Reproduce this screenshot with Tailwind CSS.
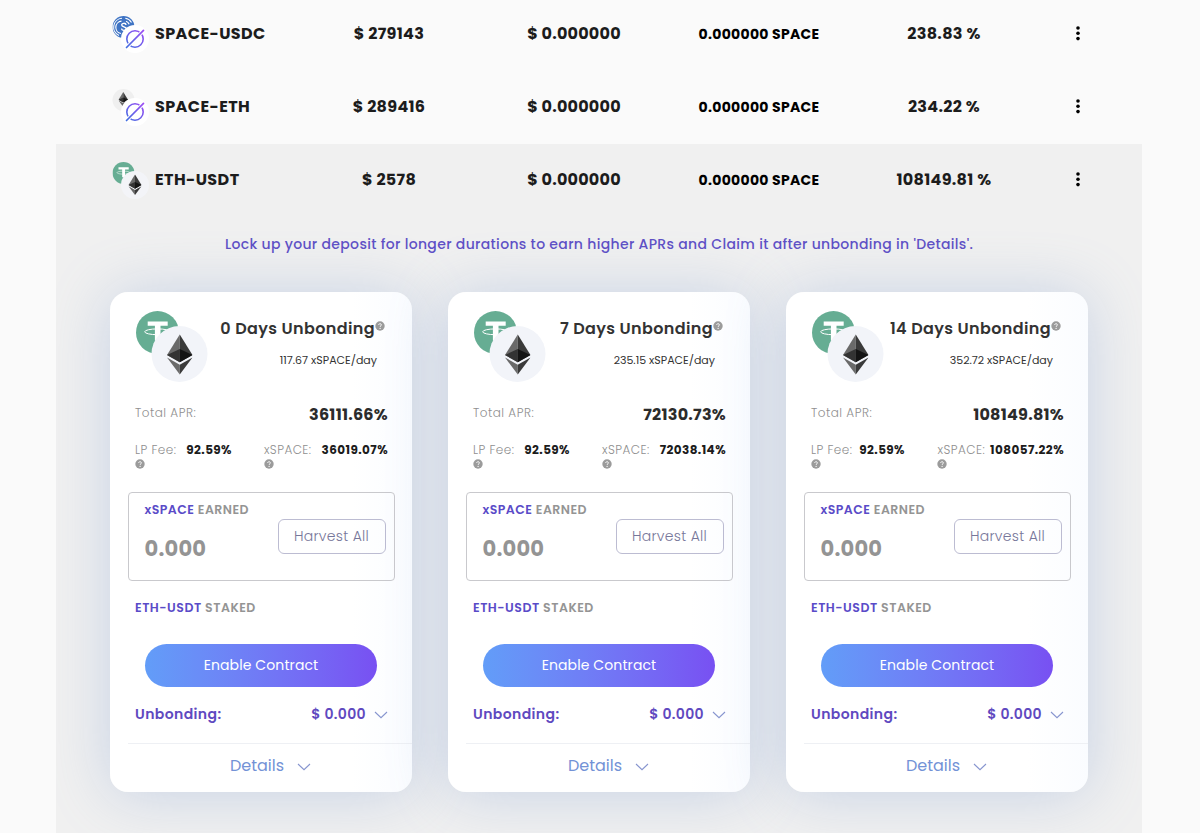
<!DOCTYPE html>
<html lang="en">
<head>
    <meta charset="UTF-8">
    <meta name="viewport" content="width=device-width, initial-scale=1.0">
    <title>Farms</title>
    <script src="https://cdn.jsdelivr.net/npm/@tailwindcss/browser@4"></script>
</head>
<body class="bg-[#fafafa] text-[#1c1c1c] font-['Poppins','Inter',sans-serif] h-[833px] overflow-hidden">

    <!-- Shared icons -->
    <svg class="absolute w-0 h-0">
        <defs>
            <linearGradient id="space-grad" gradientUnits="userSpaceOnUse" x1="5" y1="23" x2="23" y2="5">
                <stop offset="0" stop-color="#3f6fe0" />
                <stop offset="1" stop-color="#a04cf5" />
            </linearGradient>
        </defs>
        <symbol id="eth" viewBox="0 0 26 41">
            <path d="M13 0 0 21l13 7.500z" fill="#6a6a6a" />
            <path d="M13 0l13 21-13 7.500z" fill="#3a3a3a" />
            <path d="M13 15 0 21l13 7.500z" fill="#333" />
            <path d="M13 15l13 6-13 7.500z" fill="#141414" />
            <path d="M0 23.500 13 31v10z" fill="#6a6a6a" />
            <path d="M26 23.500 13 31v10z" fill="#3a3a3a" />
        </symbol>
        <symbol id="usdt" viewBox="0 0 43 43">
            <circle cx="21.500" cy="21.500" r="21.500" fill="#66ad93" />
            <path d="M11.700 10.500h20v4.300h-7.200v15h-5.600v-15h-7.200z" fill="#fff" />
            <ellipse cx="21.500" cy="20.800" rx="12.800" ry="2.900" fill="none" stroke="#fff" stroke-width="1" />
        </symbol>
        <symbol id="usdc" viewBox="0 0 22 22">
            <circle cx="11" cy="11" r="11" fill="#3f74c4" />
            <path d="M6.500 19.500A9 9 0 0 1 9.500 2.300M12.800 2.300a9 9 0 0 1 6.200 4.200" fill="none" stroke="#fff" stroke-width="1.100" />
            <path d="M8.500 17.500A6.200 6.200 0 0 1 9 5.200M13.500 5.200a6 6 0 0 1 3.200 3" fill="none" stroke="#fff" stroke-width="1.200" />
            <path d="M13.600 9c-.3-2.400-4.400-2.200-4.400 0s4.600 1.500 4.600 3.800-4.600 2.200-4.700-.3" fill="none" stroke="#fff" stroke-width="1.300" />
        </symbol>
        <symbol id="space" viewBox="0 0 28 28">
            <circle cx="14" cy="14" r="14" fill="#fff" />
            <circle cx="14" cy="14" r="8.200" fill="none" stroke="url(#space-grad)" stroke-width="1.600" />
            <path d="M6.500 21.500l15-15" stroke="#fff" stroke-width="3.400" />
            <path d="M5.500 22.500l17-17.200" stroke="url(#space-grad)" stroke-width="1.700" stroke-linecap="round" />
        </symbol>
        <symbol id="help" viewBox="0 0 10 10">
            <circle cx="5" cy="5" r="4.700" fill="#9b9b9b" />
            <path d="M3.700 4c0-1.800 2.700-1.700 2.700-.1 0 .9-1.300.9-1.300 2" fill="none" stroke="#fff" stroke-width=".9" />
            <circle cx="5.100" cy="7.400" r=".6" fill="#fff" />
        </symbol>
        <symbol id="chevron" viewBox="0 0 14 8">
            <path d="M1 1l6 5.700L13 1" fill="none" stroke="#8795cf" stroke-width="1.100" />
        </symbol>
        <symbol id="dots" viewBox="0 0 4 15">
            <circle cx="2" cy="2" r="1.800" /><circle cx="2" cy="7.300" r="1.800" /><circle cx="2" cy="12.600" r="1.800" />
        </symbol>
    </svg>

    <main class="pl-14 pr-[58px]">
        <div id="rows" class="-mt-0.5"></div>

        <!-- Expanded pool -->
        <section class="bg-[#f0f0f0] h-[700px] overflow-hidden">
            <div id="open-row"></div>
            <p class="mt-[17px] text-center text-sm leading-[21px] font-medium tracking-[0.33px] text-[#5f50c6] whitespace-nowrap">Lock up your deposit for longer durations to earn higher APRs and Claim it after unbonding in 'Details'.</p>
            <div id="cards" class="mt-[37px] pl-[54px] flex gap-9"></div>
        </section>
    </main>

    <script>
        const pairIcons = {
            "SPACE-USDC": `<use href="#usdc" x="0.500" y="0" width="22" height="22" /><use href="#space" x="9" y="9" width="28" height="28" />`,
            "SPACE-ETH": `<circle cx="11.500" cy="11" r="11" fill="#efefef" /><use href="#eth" x="6.500" y="3" width="9.500" height="15" /><use href="#space" x="9" y="9" width="28" height="28" />`,
            "ETH-USDT": `<use href="#usdt" x="0.500" y="0" width="22" height="22" /><circle cx="23" cy="23" r="14" fill="#f3f4f8" /><use href="#eth" x="16.300" y="12.500" width="13.400" height="20.500" />`
        };

        const pools = [
            { name: "SPACE-USDC", tvl: "$ 279143", apr: "238.83 %" },
            { name: "SPACE-ETH", tvl: "$ 289416", apr: "234.22 %" },
            { name: "ETH-USDT", tvl: "$ 2578", apr: "108149.81 %" }
        ];

        const cards = [
            { days: 0, rate: "117.67", apr: "36111.66%", xspace: "36019.07%", lpGap: "gap-[10px]", xGap: "gap-[10px]" },
            { days: 7, rate: "235.15", apr: "72130.73%", xspace: "72038.14%", lpGap: "gap-[10px]", xGap: "gap-[10px]" },
            { days: 14, rate: "352.72", apr: "108149.81%", xspace: "108057.22%", lpGap: "gap-[7px]", xGap: "gap-[5px]" }
        ];

        const rowHtml = p => `
            <div class="h-[73px] grid grid-cols-[240.5px_185px_185px_185px_185px_82px] items-center justify-items-center text-base font-bold tracking-[0.3px] whitespace-nowrap">
                <div class="justify-self-start pl-14 flex items-center gap-1.5">
                    <svg class="w-[37px] h-[37px]" viewBox="0 0 37 37">${pairIcons[p.name]}</svg>
                    <span class="pb-0.5 tracking-[0.4px]">${p.name}</span>
                </div>
                <span class="pb-0.5">${p.tvl}</span>
                <span class="pb-0.5 tracking-[0.22px]">$ 0.000000</span>
                <span class="pb-0.5 text-sm text-black">0.000000 SPACE</span>
                <span class="pb-0.5">${p.apr}</span>
                <svg class="w-1 h-[15px] mb-0.5"><use href="#dots" /></svg>
            </div>`;

        const cardHtml = c => `
            <div class="w-[302px] h-[500px] rounded-[18px] bg-linear-to-r from-white from-80% to-[#fafcff] shadow-[0_2px_60px_rgba(115,150,205,0.33)] flex flex-col">
                <div class="h-[110px] pt-[19px] pl-[26px] pr-[27px] flex justify-between">
                    <svg class="w-[72px] h-[72px]" viewBox="0 0 72 72">
                        <use href="#usdt" width="43" height="43" />
                        <circle cx="43.500" cy="43" r="28" fill="#f2f4f9" />
                        <use href="#eth" x="31" y="23" width="25.500" height="41" />
                    </svg>
                    <div class="pt-2 text-right whitespace-nowrap">
                        <div class="flex items-start justify-end">
                            <span class="text-base leading-5 font-semibold tracking-[0.37px] text-[#333]">${c.days} Days Unbonding</span>
                            <svg class="w-2.5 h-2.5 mt-0.5"><use href="#help" /></svg>
                        </div>
                        <div class="mt-[13px] pr-2 text-[11px] leading-4 text-[#333]">${c.rate} xSPACE/day</div>
                    </div>
                </div>

                <div class="h-[22px] pl-[25px] pr-6 flex justify-between whitespace-nowrap">
                    <span class="text-xs leading-[21px] font-light tracking-[0.5px] text-[#8f8f8f]">Total APR:</span>
                    <span class="text-base leading-[25px] font-bold tracking-[0.25px] text-[#2b2b2b]">${c.apr}</span>
                </div>
                <div class="mt-[18px] pl-[25px] pr-6 flex justify-between text-xs leading-4 tracking-[0.45px] whitespace-nowrap">
                    <div>
                        <div class="flex ${c.lpGap}"><span class="font-light text-[#8f8f8f]">LP Fee:</span><span class="font-bold tracking-[0.4px]">92.59%</span></div>
                        <svg class="w-2.5 h-2.5 mt-px"><use href="#help" /></svg>
                    </div>
                    <div>
                        <div class="flex ${c.xGap}"><span class="font-light text-[#8f8f8f]">xSPACE:</span><span class="font-bold tracking-[0.42px]">${c.xspace}</span></div>
                        <svg class="w-2.5 h-2.5 mt-px"><use href="#help" /></svg>
                    </div>
                </div>

                <div class="mt-[23px] ml-[17.5px] w-[267px] h-[89px] pl-4 pr-2 flex justify-between items-center border border-[#c9c9cd] rounded">
                    <div class="self-start pt-[9px]">
                        <div class="text-[12.5px] leading-4 font-semibold tracking-[0.45px] text-[#949494]"><span class="text-[#5a4bc8]">xSPACE</span> EARNED</div>
                        <div class="mt-[19px] text-[21px] leading-6 font-bold tracking-[0.2px] text-[#949494]">0.000</div>
                    </div>
                    <button class="w-[108px] h-[35px] pb-0.5 border border-[#bcbcd2] rounded-md text-sm font-light tracking-[0.3px] text-[#77779a]">Harvest All</button>
                </div>

                <div class="mt-[18px] pl-[25px] text-[12.5px] leading-[17px] font-semibold tracking-[0.5px] text-[#949494]"><span class="text-[#5a4bc8]">ETH-USDT</span> STAKED</div>
                <button class="mt-7 ml-[35px] w-[232px] h-[43px] pb-0.5 shrink-0 rounded-full bg-linear-to-r from-[#629df8] to-[#7850f2] text-sm tracking-[0.1px] text-white">Enable Contract</button>

                <div class="mt-[17px] pl-[25px] pr-6 flex items-center text-sm leading-5 font-semibold text-[#5f49c0]">
                    <span class="tracking-[0.4px]">Unbonding:</span>
                    <span class="ml-auto tracking-[0.35px]">$ 0.000</span>
                    <svg class="ml-2 w-3.5 h-2 mt-0.5"><use href="#chevron" /></svg>
                </div>
                <div class="mt-[19px] ml-[18px] h-[45px] border-t border-[#eef0f4] pl-[102px] flex items-center text-base text-[#7392d6]">
                    Details
                    <svg class="ml-[13px] w-3.5 h-2 mt-0.5"><use href="#chevron" /></svg>
                </div>
            </div>`;

        document.getElementById("rows").innerHTML = pools.slice(0, 2).map(rowHtml).join("");
        document.getElementById("open-row").innerHTML = rowHtml(pools[2]);
        document.getElementById("cards").innerHTML = cards.map(cardHtml).join("");
    </script>
</body>
</html>
